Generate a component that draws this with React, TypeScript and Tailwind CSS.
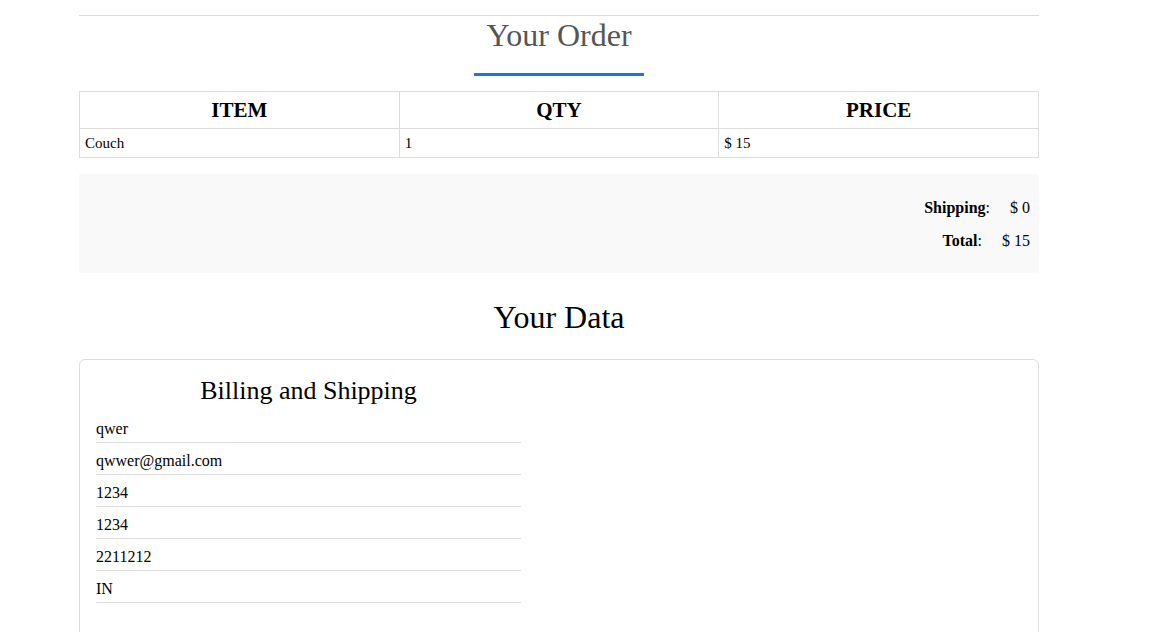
export default function App() {
  const fields = ["qwer", "qwwer@gmail.com", "1234", "1234", "2211212", "IN"];

  return (
    <div className="min-h-screen bg-white font-['Liberation_Serif',serif] text-black">
      <div className="mx-auto w-[960px] ml-[79px] pt-[15px]">
        <hr className="border-t border-[#dddddd]" />

        <h2 className="mt-[1px] text-center text-[32px] leading-[36px] text-[#555555]">Your Order</h2>
        <div className="mx-auto mt-[20px] h-[3px] w-[170px] bg-[#1a73e8]" />

        <table className="mt-[15px] w-full table-fixed border-collapse border border-[#dddddd]">
          <thead>
            <tr className="h-[37px]">
              <th className="border border-[#dddddd] pt-[2px] text-[21px] font-bold">ITEM</th>
              <th className="border border-[#dddddd] pt-[2px] text-[21px] font-bold">QTY</th>
              <th className="border border-[#dddddd] pt-[2px] text-[21px] font-bold">PRICE</th>
            </tr>
          </thead>
          <tbody>
            <tr className="h-[29px] text-[15px]">
              <td className="border border-[#dddddd] px-[5px]">Couch</td>
              <td className="border border-[#dddddd] px-[5px]">1</td>
              <td className="border border-[#dddddd] px-[5px]">$ 15</td>
            </tr>
          </tbody>
        </table>

        <div className="mt-[16px] flex h-[99px] flex-col items-end justify-center gap-[11px] bg-[#f9f9f9] pr-[9px] pt-[2px] text-[16px] leading-[22px]">
          <div className="flex gap-[20px]">
            <span>
              <b>Shipping</b>:
            </span>
            <span>$ 0</span>
          </div>
          <div className="flex gap-[20px]">
            <span>
              <b>Total</b>:
            </span>
            <span>$ 15</span>
          </div>
        </div>

        <h2 className="mt-[26px] text-center text-[32px] leading-[36px]">Your Data</h2>

        <div className="mt-[24px] h-[300px] rounded-[6px] border border-[#dddddd] px-[16px] pt-[15px]">
          <div className="w-[425px]">
            <h3 className="text-center text-[26px] leading-[32px]">Billing and Shipping</h3>
            <div className="mt-[4px]">
              {fields.map((f, i) => (
                <div key={i} className="border-b border-[#dddddd] pb-[2px] pt-[6px] text-[16px] leading-[23px]">
                  {f}
                </div>
              ))}
            </div>
          </div>
        </div>
      </div>
    </div>
  );
}
